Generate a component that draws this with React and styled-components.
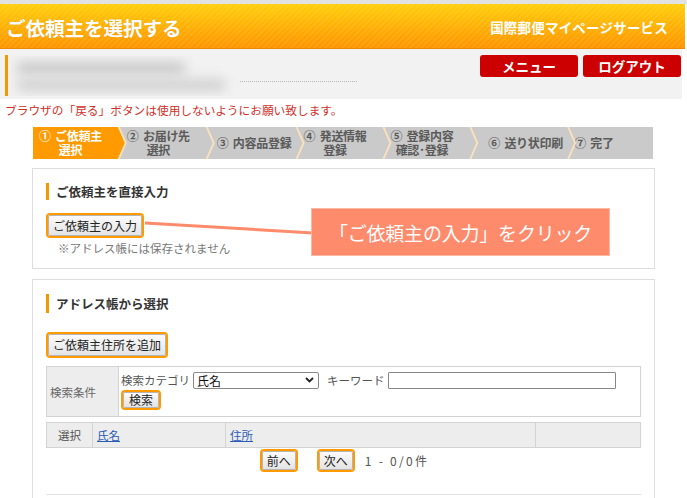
import React from "react";
import styled, { createGlobalStyle, css } from "styled-components";

const GlobalStyle = createGlobalStyle`
  body {
    margin: 0;
    background: #ffffff;
    font-family: "Noto Sans CJK JP", "Noto Sans", sans-serif;
    color: #333;
  }
`;

const Page = styled.div`
  width: 687px;
  height: 498px;
  overflow: hidden;
  border-top: 4px solid #e2e2e2;
  box-sizing: border-box;
`;

const Header = styled.div`
  width: 685px;
  height: 45px;
  box-sizing: border-box;
  display: flex;
  align-items: center;
  justify-content: space-between;
  padding: 2px 17px 0 6px;
  border-bottom: 1px solid #ee8a00;
  background:
    repeating-linear-gradient(135deg, rgba(255, 255, 255, 0.08) 0 2px, rgba(255, 255, 255, 0) 2px 4px),
    linear-gradient(#ffcf0a, #ffa200 75%, #ff9500);
`;

const Title = styled.h1`
  margin: 0;
  font-size: 19.7px;
  font-weight: 700;
  color: #fff;
  letter-spacing: -0.2px;
  text-shadow: 0 0 1px rgba(180, 90, 0, 0.4);
`;

const Service = styled.div`
  font-size: 13.5px;
  font-weight: 700;
  color: #fff;
  letter-spacing: 0.2px;
`;

const UserBar = styled.div`
  width: 682px;
  height: 50px;
  box-sizing: border-box;
  background: #f2f2f2;
  display: flex;
  justify-content: space-between;
  padding: 6px 1px 2px 5px;
`;

const UserInfo = styled.div`
  display: flex;
  align-items: center;
  border-left: 3px solid #f39800;
  height: 41px;
  padding-left: 2px;
`;

const Blur = styled.div`
  width: 230px;
  height: 40px;
  position: relative;
  overflow: hidden;
  &::before,
  &::after {
    content: "";
    position: absolute;
    left: 6px;
    height: 12px;
    border-radius: 6px;
    background: #c8c8c8;
    filter: blur(6px);
  }
  &::before {
    top: 6px;
    width: 170px;
  }
  &::after {
    top: 23px;
    width: 210px;
    background: #d0d0d0;
  }
`;

const Dotted = styled.div`
  width: 117px;
  border-top: 1px dotted #b9b9b9;
  margin-top: 12px;
`;

const NavButtons = styled.div`
  display: flex;
  gap: 5px;
  align-self: flex-start;
`;

const RedButton = styled.button`
  width: 98px;
  height: 22px;
  border: none;
  border-radius: 3px;
  background: #cc0000;
  color: #fff;
  font-family: inherit;
  font-size: 13.5px;
  font-weight: 700;
  padding: 0;
  line-height: 22px;
`;

const Notice = styled.p`
  margin: 3px 0 0 5px;
  font-size: 11.7px;
  line-height: 15px;
  color: #d0302a;
`;

const Steps = styled.ol`
  list-style: none;
  margin: 10px 0 0 33px;
  padding: 0;
  width: 620px;
  height: 32px;
  display: flex;
`;

const Step = styled.li`
  flex: 1;
  position: relative;
  display: flex;
  align-items: center;
  padding-left: ${(p) => p.$indent}px;
  font-size: 12px;
  font-weight: 700;
  line-height: 14px;
  letter-spacing: -0.3px;
  word-spacing: 2px;
  color: #5a5a5a;
  background: #cacaca;
  ${(p) =>
    p.$active &&
    css`
      color: #fff;
      background: #ff9a00;
    `}
  ${(p) =>
    !p.$last &&
    css`
      &::before,
      &::after {
        content: "";
        position: absolute;
        top: 0;
        left: 100%;
        width: 10px;
        height: 100%;
        z-index: 1;
      }
      &::before {
        background: ${p.$active ? "#ff9a00" : "#cacaca"};
        clip-path: polygon(0 0, 7px 50%, 0 100%);
      }
      &::after {
        background: #fbe2bb;
        clip-path: polygon(0 0, 2px 0, 9px 50%, 2px 100%, 0 100%, 7px 50%);
      }
    `}
`;

const StepLabel = styled.span`
  display: inline-block;
  text-align: center;
`;

const Section = styled.section`
  position: relative;
  margin: ${(p) => p.$top}px 32px 0 32px;
  border: 1px solid #dedede;
  padding: 14px 13px 0 13px;
  height: ${(p) => p.$height}px;
  box-sizing: border-box;
`;

const Heading = styled.h2`
  margin: 0;
  border-left: 3px solid #f39800;
  padding-left: 7px;
  font-size: 12.5px;
  font-weight: 700;
  color: #333;
  line-height: ${(p) => p.$h}px;
`;

const Gray = styled.button`
  font-family: inherit;
  font-size: ${(p) => p.$size || 12}px;
  color: #222;
  padding: 0 ${(p) => p.$pad || 4}px;
  height: ${(p) => p.$h || 20}px;
  border: 1px solid #b5b5b5;
  border-radius: 2px;
  background: linear-gradient(#fbfbfb, #e4e4e4);
  box-shadow: 0 0 0 2px #ff9a00;
  line-height: 1;
`;

const ButtonRow = styled.div`
  margin: ${(p) => p.$mt}px 0 0 2px;
  line-height: 0;
`;

const Note = styled.p`
  margin: 5px 0 0 12px;
  font-size: 11.5px;
  color: #777;
  line-height: 15px;
`;

const Callout = styled.div`
  position: absolute;
  left: 278px;
  top: 39px;
  width: 299px;
  height: 48px;
  box-sizing: border-box;
  background: #ff8b6d;
  border: 1px solid #ffb7a3;
  color: #fff;
  font-size: 19px;
  display: flex;
  align-items: center;
  justify-content: center;
  letter-spacing: -0.2px;
`;

const Leader = styled.svg`
  position: absolute;
  left: 110px;
  top: 48px;
  overflow: visible;
`;

const SearchTable = styled.table`
  margin-top: 10px;
  width: 595px;
  border-collapse: collapse;
  border: 1px solid #d3d3d3;
  font-size: 11.5px;
  color: #555;
`;

const LabelCell = styled.th`
  width: 72px;
  box-sizing: border-box;
  background: #ededed;
  border-right: 1px solid #d3d3d3;
  font-weight: 400;
  text-align: left;
  padding: 0 0 0 3px;
  color: #666;
`;

const FieldCell = styled.td`
  padding: 4px 0 8px 2px;
`;

const FieldLine = styled.div`
  display: flex;
  align-items: center;
  gap: 3px;
  height: 18px;
`;

const Select = styled.div`
  width: 126px;
  height: 17px;
  box-sizing: border-box;
  border: 1px solid #888;
  border-radius: 2px;
  display: flex;
  align-items: center;
  justify-content: space-between;
  padding: 0 4px 0 3px;
  font-size: 12px;
  color: #111;
  margin-right: 5px;
`;

const Input = styled.div`
  width: 228px;
  height: 17px;
  box-sizing: border-box;
  border: 1px solid #888;
  border-radius: 1px;
`;

const ResultTable = styled.table`
  margin-top: 5px;
  width: 595px;
  border-collapse: collapse;
  border: 1px solid #d3d3d3;
  background: #ededed;
  font-size: 11.5px;
  color: #555;
`;

const Th = styled.th`
  box-sizing: border-box;
  height: 25px;
  font-weight: 400;
  text-align: left;
  padding: 0 0 0 4px;
  border-right: 1px solid #d3d3d3;
  width: ${(p) => (p.$w ? `${p.$w}px` : "auto")};
  ${(p) => p.$center && "text-align: center; padding: 0;"}
`;

const Link = styled.a`
  color: #2a5bb8;
  text-decoration: underline;
`;

const Pager = styled.div`
  display: flex;
  align-items: center;
  justify-content: center;
  gap: 23px;
  margin: 3px 0 0 0;
  padding-left: 4px;
  font-size: 12px;
  color: #555;
`;

const PagerText = styled.span`
  margin-left: -11px;
  letter-spacing: 2.3px;
`;

const BottomRule = styled.div`
  margin-top: 24px;
  border-top: 1px solid #e2e2e2;
`;

const steps = [
  { label: ["① ご依頼主", "選択"], indent: 6 },
  { label: ["② お届け先", "選択"], indent: 9 },
  { label: ["③ 内容品登録"], indent: 11 },
  { label: ["④ 発送情報", "登録"], indent: 8 },
  { label: ["⑤ 登録内容", "確認･登録"], indent: 8 },
  { label: ["⑥ 送り状印刷"], indent: 19 },
  { label: ["⑦ 完了"], indent: 7 },
];

export default function App() {
  return (
    <Page>
      <GlobalStyle />
      <Header>
        <Title>ご依頼主を選択する</Title>
        <Service>国際郵便マイページサービス</Service>
      </Header>
      <UserBar>
        <UserInfo>
          <Blur />
          <Dotted />
        </UserInfo>
        <NavButtons>
          <RedButton>メニュー</RedButton>
          <RedButton>ログアウト</RedButton>
        </NavButtons>
      </UserBar>
      <Notice>ブラウザの「戻る」ボタンは使用しないようにお願い致します。</Notice>

      <Steps>
        {steps.map((s, i) => (
          <Step key={i} $indent={s.indent} $active={i === 0} $last={i === steps.length - 1}>
            <StepLabel>
              {s.label[0]}
              {s.label[1] && <br />}
              {s.label[1]}
            </StepLabel>
          </Step>
        ))}
      </Steps>

      <Section $top={9} $height={101}>
        <Heading $h={17}>ご依頼主を直接入力</Heading>
        <ButtonRow $mt={15}>
          <Gray $h={21}>ご依頼主の入力</Gray>
        </ButtonRow>
        <Note>※アドレス帳には保存されません</Note>
        <Leader width="170" height="20">
          <line x1="2" y1="6" x2="170" y2="16" stroke="#ff8b6d" strokeWidth="3" />
        </Leader>
        <Callout>「ご依頼主の入力」をクリック</Callout>
      </Section>

      <Section $top={10} $height={240}>
        <Heading $h={19}>アドレス帳から選択</Heading>
        <ButtonRow $mt={21}>
          <Gray $h={22}>ご依頼主住所を追加</Gray>
        </ButtonRow>
        <SearchTable>
          <tbody>
            <tr>
              <LabelCell>検索条件</LabelCell>
              <FieldCell>
                <FieldLine>
                  <span>検索カテゴリ</span>
                  <Select>
                    <span>氏名</span>
                    <svg width="9" height="6" viewBox="0 0 9 6">
                      <path d="M1 1l3.5 3.5L8 1" fill="none" stroke="#222" strokeWidth="1.8" />
                    </svg>
                  </Select>
                  <span>キーワード</span>
                  <Input />
                </FieldLine>
                <ButtonRow $mt={3}>
                  <Gray $h={16} $pad={5}>検索</Gray>
                </ButtonRow>
              </FieldCell>
            </tr>
          </tbody>
        </SearchTable>
        <ResultTable>
          <thead>
            <tr>
              <Th $w={46} $center>選択</Th>
              <Th $w={133}>
                <Link>氏名</Link>
              </Th>
              <Th $w={310}>
                <Link>住所</Link>
              </Th>
              <Th />
            </tr>
          </thead>
        </ResultTable>
        <Pager>
          <Gray $h={19}>前へ</Gray>
          <Gray $h={19}>次へ</Gray>
          <PagerText>1 - 0/0件</PagerText>
        </Pager>
        <BottomRule />
      </Section>
    </Page>
  );
}
